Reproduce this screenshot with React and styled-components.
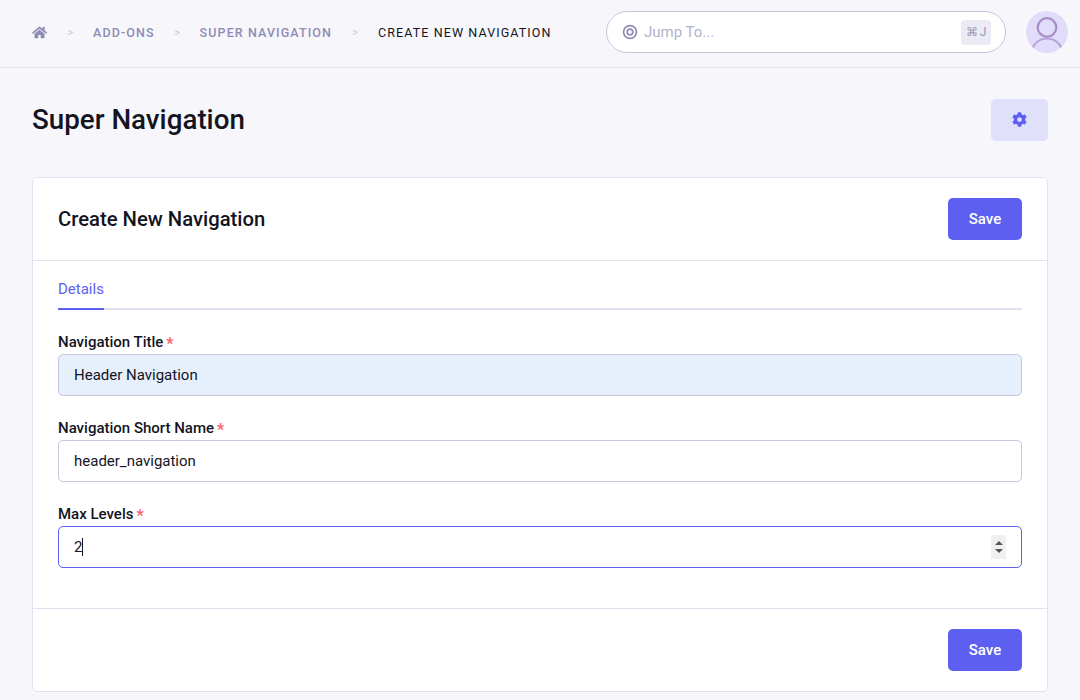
import styled, { createGlobalStyle } from "styled-components"
import { FaHome, FaCog } from "react-icons/fa"

const Global = createGlobalStyle`
    * { box-sizing: border-box; }
    html, body { margin: 0; padding: 0; height: 700px; overflow: hidden; }
    body {
        background: #f6f6fb;
        font-family: Roboto, "Liberation Sans", sans-serif;
        color: #14141f;
    }
`

const Header = styled.header`
    height: 68px;
    display: flex;
    align-items: center;
    padding: 0 12px 3px 32px;
    border-bottom: 1px solid #e3e1ef;
`

const Crumbs = styled.nav`
    width: 574px;
    display: flex;
    align-items: center;
    font-size: 12.5px;
    font-weight: 500;
    letter-spacing: 1.1px;
    color: #8f8cb5;
`

const HomeLink = styled.span`
    display: flex;
    width: 16px;
    font-size: 15px;
`

const Sep = styled.span`
    width: ${(p) => p.$w}px;
    text-align: center;
    font-weight: 400;
    font-size: 11px;
    letter-spacing: 0;
    color: #c8c7d6;
`

const Crumb = styled.span`
    color: ${(p) => (p.$current ? "#14141f" : "#8f8cb5")};
    font-weight: ${(p) => (p.$current ? 400 : 500)};
    white-space: nowrap;
`

const Search = styled.div`
    width: 400px;
    height: 42px;
    display: flex;
    align-items: center;
    gap: 6px;
    padding: 0 14px 0 15px;
    background: #fff;
    border: 1px solid #c9c6dc;
    border-radius: 21px;
`

const SearchInput = styled.input`
    flex: 1;
    min-width: 0;
    border: 0;
    outline: 0;
    padding: 0;
    background: transparent;
    font: 400 15px Roboto, sans-serif;
    &::placeholder { color: #b3b1cb; opacity: 1; }
`

const Kbd = styled.span`
    width: 30px;
    height: 25px;
    display: flex;
    align-items: center;
    justify-content: center;
    gap: 2px;
    border-radius: 4px;
    background: #ebebf5;
    color: #9a98b8;
    font-size: 12px;
`

const Avatar = styled.div`
    width: 42px;
    height: 42px;
    margin-left: 20px;
    border-radius: 50%;
    overflow: hidden;
    background: #e1dcfa;
`

const Main = styled.main`
    padding: 31px 32px 0;
`

const TitleRow = styled.div`
    height: 42px;
    display: flex;
    align-items: center;
    justify-content: space-between;
    margin-bottom: 36px;
`

const PageTitle = styled.h1`
    margin: 0 0 2px;
    font-size: 27.75px;
    font-weight: 500;
    color: #14141f;
`

const SettingsButton = styled.button`
    width: 57px;
    height: 42px;
    display: flex;
    align-items: center;
    justify-content: center;
    padding: 0 0 2px;
    border: 0;
    border-radius: 5px;
    background: #e0e0fb;
    color: #5c5ff0;
    font-size: 15px;
`

const Card = styled.section`
    height: 515px;
    background: #fff;
    border: 1px solid #e3e1ef;
    border-radius: 6px;
`

const CardHead = styled.div`
    height: 83px;
    display: flex;
    align-items: center;
    justify-content: space-between;
    padding: 0 25px;
    border-bottom: 1px solid #e3e1ef;
`

const CardTitle = styled.h2`
    margin: 0;
    font-size: 20.25px;
    font-weight: 500;
    color: #14141f;
`

const SaveButton = styled.button`
    width: 74px;
    height: 42px;
    border: 0;
    border-radius: 5px;
    background: #5c5ff0;
    color: #fff;
    font: 500 15px Roboto, sans-serif;
`

const CardBody = styled.div`
    height: 348px;
    padding: 0 25px;
    border-bottom: 1px solid #e3e1ef;
`

const Tabs = styled.div`
    height: 49px;
    display: flex;
    border-bottom: 2px solid #e0e0f0;
    margin-bottom: 22px;
`

const Tab = styled.div`
    height: 49px;
    padding-top: 19px;
    font-size: 15px;
    line-height: 18px;
    color: #5c5ff0;
    border-bottom: 2px solid #5c5ff0;
`

const Field = styled.div`
    margin-bottom: 22px;
`

const Label = styled.label`
    display: block;
    height: 22px;
    font-size: 15px;
    font-weight: 500;
    line-height: 20px;
    color: #14141f;
`

const Req = styled.span`
    margin-left: 3px;
    font-size: 16px;
    font-weight: 700;
    line-height: 1;
    vertical-align: -2px;
    color: #f9616f;
`

const InputWrap = styled.div`
    position: relative;
`

const Input = styled.input`
    display: block;
    width: 100%;
    height: 42px;
    padding: 0 15px;
    border: 1px solid ${(p) => (p.$focused ? "#5c5ff0" : "#c9c6dc")};
    border-radius: 5px;
    outline: 0;
    background: ${(p) => (p.$filled ? "#e6f0fc" : "#fff")};
    color: #14141f;
    caret-color: transparent;
    font: 400 15px Roboto, sans-serif;
    &::-webkit-inner-spin-button,
    &::-webkit-outer-spin-button { -webkit-appearance: none; margin: 0; }
`

const TextCaret = styled.span`
    position: absolute;
    top: 12px;
    left: 24px;
    width: 1px;
    height: 18px;
    background: #14141f;
`

const Spinner = styled.div`
    position: absolute;
    top: 9px;
    right: 16px;
    width: 15px;
    height: 24px;
    display: flex;
    flex-direction: column;
    align-items: center;
    justify-content: center;
    gap: 4px;
    background: #f0f0f0;
`

const Footer = styled.div`
    display: flex;
    justify-content: flex-end;
    padding: 20px 25px;
`

const TargetIcon = () => (
    <svg width="16" height="16" viewBox="0 0 16 16" fill="none" stroke="#8f8cb5">
        <circle cx="8" cy="8" r="6.4" strokeWidth="1.7" />
        <circle cx="8" cy="8" r="2.8" strokeWidth="1.7" />
    </svg>
)

const PersonIcon = () => (
    <svg width="42" height="42" viewBox="0 0 42 42" fill="none" strokeWidth="2.2">
        <circle cx="21" cy="16.500" r="9.300" stroke="#a58cc4" />
        <path d="M6 38c3-7 9-10.500 15-10.500S33 31 36 38" stroke="#b9a4d8" />
    </svg>
)

const Caret = ({ up }) => (
    <svg width="8" height="4" viewBox="0 0 8 4" fill="#555">
        <path d={up ? "M4 0 8 4H0z" : "M0 0h8L4 4z"} />
    </svg>
)

export default function App() {
    return (
        <>
            <Global />
            <Header>
                <Crumbs>
                    <HomeLink><FaHome /></HomeLink>
                    <Sep $w={45}>&gt;</Sep>
                    <Crumb>ADD-ONS</Crumb>
                    <Sep $w={45}>&gt;</Sep>
                    <Crumb>SUPER NAVIGATION</Crumb>
                    <Sep $w={46}>&gt;</Sep>
                    <Crumb $current>CREATE NEW NAVIGATION</Crumb>
                </Crumbs>
                <Search>
                    <TargetIcon />
                    <SearchInput placeholder="Jump To..." />
                    <Kbd><span>⌘</span><span>J</span></Kbd>
                </Search>
                <Avatar><PersonIcon /></Avatar>
            </Header>
            <Main>
                <TitleRow>
                    <PageTitle>Super Navigation</PageTitle>
                    <SettingsButton><FaCog /></SettingsButton>
                </TitleRow>
                <Card>
                    <CardHead>
                        <CardTitle>Create New Navigation</CardTitle>
                        <SaveButton>Save</SaveButton>
                    </CardHead>
                    <CardBody>
                        <Tabs><Tab>Details</Tab></Tabs>
                        <Field>
                            <Label>Navigation Title<Req>*</Req></Label>
                            <Input $filled defaultValue="Header Navigation" />
                        </Field>
                        <Field>
                            <Label>Navigation Short Name<Req>*</Req></Label>
                            <Input defaultValue="header_navigation" />
                        </Field>
                        <Field>
                            <Label>Max Levels<Req>*</Req></Label>
                            <InputWrap>
                                <Input $focused type="number" defaultValue="2" />
                                <TextCaret />
                                <Spinner><Caret up /><Caret /></Spinner>
                            </InputWrap>
                        </Field>
                    </CardBody>
                    <Footer><SaveButton>Save</SaveButton></Footer>
                </Card>
            </Main>
        </>
    )
}
